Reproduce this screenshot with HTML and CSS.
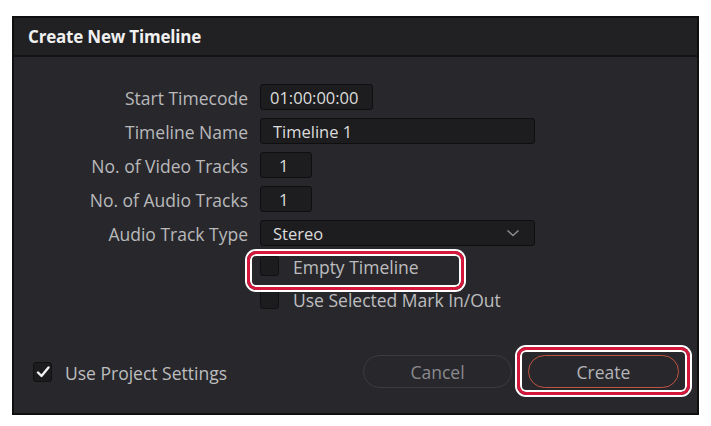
FILE: index.html
```html
<!DOCTYPE html>
<html>
<head>
<meta charset="utf-8">
<link rel="stylesheet" href="styles.css">
</head>
<body>
<div class="dialog">
  <div class="titlebar">Create New Timeline</div>
  <div class="content">
    <div class="form">
      <label class="lbl">Start Timecode</label>
      <div class="field tc">01:00:00:00</div>
      <label class="lbl">Timeline Name</label>
      <div class="field wide">Timeline 1</div>
      <label class="lbl">No. of Video Tracks</label>
      <div class="field num">1</div>
      <label class="lbl">No. of Audio Tracks</label>
      <div class="field num">1</div>
      <label class="lbl">Audio Track Type</label>
      <div class="field wide select">
        <span>Stereo</span>
        <svg class="chev" width="14" height="8" viewBox="0 0 14 8"><path d="M1.5 1.5 L7 6.5 L12.5 1.5" fill="none" stroke="#8a8a8e" stroke-width="1.6"/></svg>
      </div>
    </div>
    <div class="checks">
      <div class="check-row"><span class="cbox"></span><span class="ctext">Empty Timeline</span></div>
      <div class="check-row"><span class="cbox"></span><span class="ctext">Use Selected Mark In/Out</span></div>
    </div>
    <div class="footer">
      <div class="check-row project">
        <span class="cbox checked"><svg width="14" height="12" viewBox="0 0 14 12"><path d="M2 6.5 L5.5 10 L12.5 1.5" fill="none" stroke="#f2f2f2" stroke-width="2.4" stroke-linecap="round" stroke-linejoin="round"/></svg></span>
        <span class="ctext">Use Project Settings</span>
      </div>
      <div class="buttons">
        <button class="btn cancel">Cancel</button>
        <button class="btn create">Create</button>
      </div>
    </div>
  </div>
  <div class="highlight hl-empty"></div>
  <div class="highlight hl-create"></div>
</div>
</body>
</html>
```
FILE: styles.css
```css
html, body {
  margin: 0;
  padding: 0;
  background: #ffffff;
}
body {
  font-family: "Open Sans", "Noto Sans", sans-serif;
  padding: 16px 0 0 12px;
}
.dialog {
  position: relative;
  box-sizing: border-box;
  width: 687px;
  height: 399px;
  border: 2px solid #0f0f10;
  background: #28282c;
  display: flex;
  flex-direction: column;
}
.titlebar {
  height: 39px;
  box-sizing: border-box;
  background: #212124;
  border-bottom: 2px solid #141416;
  color: #f0f0f0;
  font-weight: 700;
  font-size: 17px;
  padding-left: 14px;
  display: flex;
  align-items: center;
  letter-spacing: -0.2px;
}
.content {
  flex: 1;
  display: flex;
  flex-direction: column;
  padding-top: 27px;
}
.form {
  display: grid;
  grid-template-columns: 234px auto;
  grid-auto-rows: 26px;
  column-gap: 12px;
  row-gap: 8px;
  align-items: center;
}
.lbl {
  text-align: right;
  color: #b9b9bb;
  font-size: 17.5px;
  line-height: 26px;
  height: 26px;
  position: relative;
  top: 1px;
}
.field {
  box-sizing: border-box;
  height: 26px;
  background: #1d1d1f;
  border: 1px solid #0f0f10;
  border-radius: 3px;
  color: #dcdcdc;
  font-size: 16.5px;
  line-height: 25px;
  padding-left: 12px;
}
.tc { width: 113px; padding-left: 9px; }
.wide { width: 275px; }
.num { width: 52px; padding-left: 18px; }
.select {
  display: flex;
  align-items: center;
  justify-content: space-between;
  padding-right: 14px;
}
.chev { display: block; }
.checks {
  margin-top: 10px;
  padding-left: 246px;
  display: flex;
  flex-direction: column;
  gap: 13px;
}
.check-row {
  display: flex;
  align-items: center;
  gap: 14px;
  height: 20px;
}
.cbox {
  box-sizing: border-box;
  width: 19px;
  height: 20px;
  background: #1c1c1e;
  border: 1px solid #111112;
  border-radius: 3px;
  display: flex;
  align-items: center;
  justify-content: center;
  flex: none;
}
.ctext {
  color: #bdbdbf;
  font-size: 17.5px;
  line-height: 20px;
  position: relative;
  top: 1px;
}
.footer {
  margin-top: auto;
  padding: 0 18px 25px 19px;
  display: flex;
  align-items: center;
  justify-content: space-between;
}
.project { gap: 13px; }
.buttons {
  display: flex;
  gap: 16px;
}
.btn {
  box-sizing: border-box;
  height: 33px;
  border-radius: 17px;
  background: transparent;
  font-family: "Open Sans", "Noto Sans", sans-serif;
  font-size: 17.5px;
  color: #a0a0a4;
  padding: 1px 0 0;
}
.cancel {
  width: 149px;
  border: 1px solid #3c3c40;
  color: #8a8a8e;
}
.create {
  width: 151px;
  border: 1px solid #c0533f;
  color: #b4b4b8;
}
.highlight {
  position: absolute;
  box-sizing: border-box;
  border: 3px solid #d5173c;
  border-radius: 9px;
  box-shadow: 0 0 0 2px #ffffff, inset 0 0 0 2px #ffffff;
  pointer-events: none;
}
.hl-empty {
  left: 233px;
  top: 233px;
  width: 217px;
  height: 39px;
}
.hl-create {
  left: 503px;
  top: 329px;
  width: 173px;
  height: 48px;
}
```
